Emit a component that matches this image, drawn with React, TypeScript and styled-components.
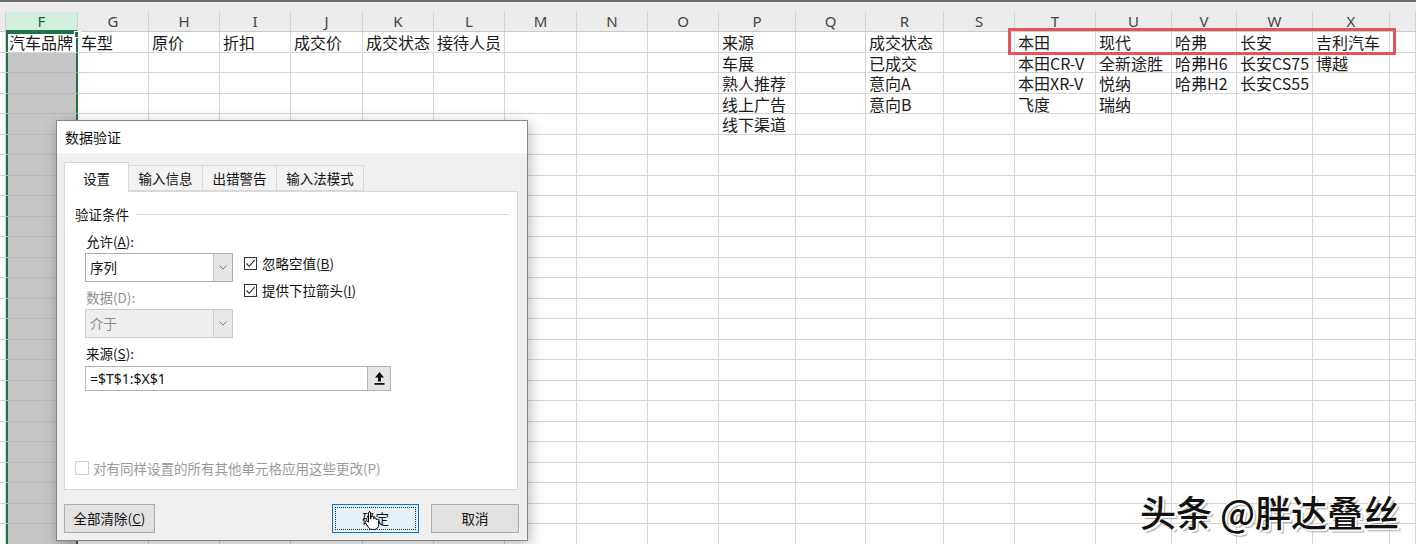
import React from "react";
import styled, { createGlobalStyle } from "styled-components";

const GlobalStyle = createGlobalStyle`
  html, body {
    margin: 0;
    padding: 0;
    background: #ffffff;
    overflow: hidden;
  }
  body {
    width: 1416px;
    height: 544px;
    font-family: "Noto Sans CJK SC", "Noto Sans", sans-serif;
  }
`;

const COLUMNS = [
  { key: "", width: 6 },
  { key: "F", width: 72 },
  { key: "G", width: 71 },
  { key: "H", width: 71 },
  { key: "I", width: 71 },
  { key: "J", width: 72 },
  { key: "K", width: 71 },
  { key: "L", width: 71 },
  { key: "M", width: 72 },
  { key: "N", width: 71 },
  { key: "O", width: 71 },
  { key: "P", width: 77 },
  { key: "Q", width: 70 },
  { key: "R", width: 78 },
  { key: "S", width: 71 },
  { key: "T", width: 81 },
  { key: "U", width: 76 },
  { key: "V", width: 65 },
  { key: "W", width: 76 },
  { key: "X", width: 77 },
  { key: "", width: 26 },
];

const CELLS: Record<string, string> = {
  F1: "汽车品牌",
  G1: "车型",
  H1: "原价",
  I1: "折扣",
  J1: "成交价",
  K1: "成交状态",
  L1: "接待人员",
  P1: "来源",
  R1: "成交状态",
  T1: "本田",
  U1: "现代",
  V1: "哈弗",
  W1: "长安",
  X1: "吉利汽车",
  P2: "车展",
  R2: "已成交",
  T2: "本田CR-V",
  U2: "全新途胜",
  V2: "哈弗H6",
  W2: "长安CS75",
  X2: "博越",
  P3: "熟人推荐",
  R3: "意向A",
  T3: "本田XR-V",
  U3: "悦纳",
  V3: "哈弗H2",
  W3: "长安CS55",
  P4: "线上广告",
  R4: "意向B",
  T4: "飞度",
  U4: "瑞纳",
  P5: "线下渠道",
};

const ROW_COUNT = 26;
const SELECTED_COL = "F";
const GREEN = "#217346";

const Screen = styled.div`
  position: relative;
  width: 1416px;
  height: 544px;
  overflow: hidden;
  background: #ffffff;
`;

const Sheet = styled.div`
  display: flex;
  flex-direction: column;
  width: 1416px;
`;

const TopStrip = styled.div`
  height: 10px;
  border-top: 2px solid #6e6e6e;
  background: #ececec;
`;

const HeaderRow = styled.div`
  display: flex;
  height: 20px;
  background: #ececec;
`;

const ColHeader = styled.div<{ $w: number; $active?: boolean }>`
  flex: none;
  box-sizing: border-box;
  width: ${(p) => p.$w}px;
  height: 20px;
  border-right: 1px solid #d2d2d2;
  border-bottom: ${(p) => (p.$active ? `2px solid ${GREEN}` : "1px solid #c9c9c9")};
  background: ${(p) => (p.$active ? "#d3efdf" : "transparent")};
  color: ${(p) => (p.$active ? "#1d5f3f" : "#454545")};
  font-family: "Noto Sans", sans-serif;
  font-size: 15px;
  line-height: 19px;
  text-align: center;
`;

const Row = styled.div`
  display: flex;
  height: 20.5px;
`;

const Cell = styled.div<{ $w: number; $sel?: boolean; $first?: boolean }>`
  position: relative;
  flex: none;
  box-sizing: border-box;
  width: ${(p) => p.$w}px;
  height: 20.5px;
  padding: 1px 0 0 3px;
  border-right: 1px solid ${(p) => (p.$sel ? GREEN : "#d6d6d6")};
  border-bottom: 1px solid ${(p) => (p.$sel && !p.$first ? "#b9b9b9" : "#d6d6d6")};
  background: ${(p) => (p.$sel && !p.$first ? "#c6c6c6" : "#ffffff")};
  box-shadow: ${(p) =>
    p.$sel
      ? p.$first
        ? `inset 2px 0 0 ${GREEN}, inset -1px 0 0 ${GREEN}, inset 0 2px 0 ${GREEN}`
        : `inset 2px 0 0 ${GREEN}, inset -1px 0 0 ${GREEN}`
      : "none"};
  color: #1b1b1b;
  font-size: 16px;
  line-height: 18.5px;
  white-space: nowrap;

  &::after {
    content: "";
    display: ${(p) => (p.$sel && p.$first ? "block" : "none")};
    position: absolute;
    top: -1px;
    right: -4px;
    width: 5px;
    height: 5px;
    background: ${GREEN};
    border: 1px solid #ffffff;
  }
`;

const Highlight = styled.div`
  position: absolute;
  left: 1008px;
  top: 28px;
  width: 388px;
  height: 27px;
  box-sizing: border-box;
  border: 3px solid #e5535e;
`;

const Dialog = styled.div`
  position: absolute;
  left: 56px;
  top: 120px;
  width: 472px;
  height: 421px;
  box-sizing: border-box;
  border: 1px solid #858585;
  background: #f0f0f0;
  box-shadow: 2px 4px 14px rgba(0, 0, 0, 0.28);
  display: flex;
  flex-direction: column;
  font-size: 13.5px;
  color: #111;
`;

const TitleBar = styled.div`
  height: 32px;
  padding-left: 8px;
  background: #ffffff;
  line-height: 32px;
  font-size: 14px;
`;

const DialogBody = styled.div`
  display: flex;
  flex-direction: column;
  padding: 9px 9px 0 7px;
`;

const TabStrip = styled.div`
  display: flex;
  align-items: flex-end;
  height: 29px;
`;

const Tab = styled.div<{ $w: number; $active?: boolean }>`
  position: relative;
  z-index: ${(p) => (p.$active ? 2 : 1)};
  box-sizing: border-box;
  width: ${(p) => p.$w}px;
  height: ${(p) => (p.$active ? 30 : 26)}px;
  margin-bottom: ${(p) => (p.$active ? -1 : 0)}px;
  margin-left: ${(p) => (p.$active ? 0 : -1)}px;
  border: 1px solid #d9d9d9;
  border-bottom: ${(p) => (p.$active ? "none" : "1px solid #d9d9d9")};
  background: ${(p) => (p.$active ? "#ffffff" : "#f3f3f3")};
  text-align: center;
  line-height: ${(p) => (p.$active ? 30 : 24)}px;
`;

const TabPanel = styled.div`
  box-sizing: border-box;
  height: 299px;
  display: flex;
  flex-direction: column;
  padding: 13px 8px 11px 10px;
  background: #ffffff;
  border: 1px solid #d9d9d9;
`;

const GroupHeader = styled.div`
  display: flex;
  align-items: center;
  height: 18px;
  gap: 8px;
`;

const GroupRule = styled.div`
  flex: 1;
  height: 1px;
  background: #dcdcdc;
`;

const Criteria = styled.div`
  display: flex;
  padding-left: 10px;
  margin-top: 8px;
`;

const FieldColumn = styled.div`
  display: flex;
  flex-direction: column;
  width: 148px;
`;

const FieldLabel = styled.div<{ $disabled?: boolean; $gap: number }>`
  height: 20px;
  margin-top: ${(p) => p.$gap}px;
  padding-left: 1px;
  line-height: 20px;
  color: ${(p) => (p.$disabled ? "#8d8d8d" : "#111")};
`;

const Select = styled.div<{ $disabled?: boolean }>`
  display: flex;
  box-sizing: border-box;
  height: 29px;
  margin-top: 2px;
  border: 1px solid ${(p) => (p.$disabled ? "#cccccc" : "#adadad")};
  background: ${(p) => (p.$disabled ? "#efefef" : "#ffffff")};
  color: ${(p) => (p.$disabled ? "#8d8d8d" : "#111")};
`;

const SelectValue = styled.div`
  flex: 1;
  padding-left: 4px;
  line-height: 27px;
`;

const SelectArrow = styled.div<{ $disabled?: boolean }>`
  display: flex;
  align-items: center;
  justify-content: center;
  width: 18px;
  border-left: 1px solid ${(p) => (p.$disabled ? "#d0d0d0" : "#c4c4c4")};
  background: ${(p) => (p.$disabled ? "#e9e9e9" : "#e6e6e6")};
`;

const OptionColumn = styled.div`
  display: flex;
  flex-direction: column;
  gap: 7px;
  margin-left: 11px;
  padding-top: 22px;
`;

const CheckRow = styled.div<{ $disabled?: boolean }>`
  display: flex;
  align-items: center;
  height: 20px;
  gap: 5px;
  color: ${(p) => (p.$disabled ? "#9a9a9a" : "#111")};
`;

const Box = styled.div<{ $disabled?: boolean }>`
  display: flex;
  align-items: center;
  justify-content: center;
  box-sizing: border-box;
  width: ${(p) => (p.$disabled ? 14 : 13)}px;
  height: ${(p) => (p.$disabled ? 14 : 13)}px;
  border: 1px solid ${(p) => (p.$disabled ? "#cfcfcf" : "#333333")};
  background: #ffffff;
`;

const SourceBlock = styled.div`
  display: flex;
  flex-direction: column;
  padding-left: 10px;
`;

const RefInput = styled.div`
  display: flex;
  box-sizing: border-box;
  width: 306px;
  height: 25px;
  margin-top: 3px;
  border: 1px solid #b4b4b4;
  background: #ffffff;
`;

const RefText = styled.div`
  flex: 1;
  padding-left: 4px;
  font-family: "Noto Sans", sans-serif;
  font-size: 14px;
  line-height: 23px;
`;

const RefButton = styled.div`
  display: flex;
  align-items: center;
  justify-content: center;
  width: 22px;
  border-left: 1px solid #b4b4b4;
  background: #e4e4e4;
`;

const ApplyRow = styled(CheckRow)`
  margin-top: auto;
  gap: 4px;
`;

const ButtonBar = styled.div`
  display: flex;
  justify-content: space-between;
  margin-top: 14px;
`;

const ButtonGroup = styled.div`
  display: flex;
  gap: 12px;
  margin-right: -1px;
`;

const DialogButton = styled.div<{ $w: number; $primary?: boolean }>`
  position: relative;
  box-sizing: border-box;
  width: ${(p) => p.$w}px;
  height: 29px;
  border: 1px solid ${(p) => (p.$primary ? "#0078d7" : "#adadad")};
  background: ${(p) => (p.$primary ? "#e5f1fb" : "#e1e1e1")};
  text-align: center;
  line-height: 27px;

  &::after {
    content: "";
    display: ${(p) => (p.$primary ? "block" : "none")};
    position: absolute;
    inset: 2px;
    border: 1px dotted #222;
  }
`;

const Pointer = styled.div`
  position: absolute;
  left: 364px;
  top: 510px;
  width: 17px;
  height: 21px;
`;

const Watermark = styled.div`
  position: absolute;
  right: 17px;
  top: 491px;
  font-size: 36px;
  font-weight: 500;
  line-height: 40px;
  color: #111111;
  text-shadow: 2px 2px 0 #ffffff, 3px 3px 1px rgba(0, 0, 0, 0.35), -1px -1px 0 #ffffff;
  white-space: nowrap;
`;

const Chevron = () => (
  <svg width="8" height="5" viewBox="0 0 8 5">
    <path d="M0.5 0.5 L4 4 L7.5 0.5" fill="none" stroke="#7a7a7a" strokeWidth="1" />
  </svg>
);

const Check = () => (
  <svg width="11" height="11" viewBox="0 0 11 11">
    <path d="M1.5 5.5 L4.2 8.3 L9.6 2.2" fill="none" stroke="#222" strokeWidth="1.1" />
  </svg>
);

const CollapseIcon = () => (
  <svg width="11" height="15" viewBox="0 0 11 15">
    <path d="M5.5 1 L10 6.5 L7 6.5 L7 10.5 L4 10.5 L4 6.5 L1 6.5 Z" fill="#111" />
    <rect x="0.5" y="12" width="10" height="1.8" fill="#111" />
  </svg>
);

const HandCursor = () => (
  <svg width="17" height="21" viewBox="0 0 17 21">
    <path
      d="M5 1.5c.8 0 1.5.6 1.5 1.4v6l.5-.1V7.5c0-.8.7-1.3 1.4-1.3s1.3.5 1.3 1.3v1.2c.2-.6.7-.9 1.3-.9.7 0 1.3.5 1.3 1.3v.9c.2-.4.7-.7 1.2-.7.7 0 1.2.6 1.2 1.3v4.2c0 2.6-2 4.7-4.6 4.7H8.4c-1.5 0-2.9-.7-3.8-1.9L1.4 12.9c-.4-.6-.3-1.4.3-1.8.6-.4 1.4-.3 1.9.2l.9 1V2.9c0-.8.7-1.4 1.5-1.4z"
      fill="#ffffff"
      stroke="#000000"
      strokeWidth="1"
    />
  </svg>
);

const rows = Array.from({ length: ROW_COUNT }, (_, i) => i + 1);

const DataValidationDialog = () => (
  <Dialog>
    <TitleBar>数据验证</TitleBar>
    <DialogBody>
      <TabStrip>
        <Tab $w={65} $active>设置</Tab>
        <Tab $w={75}>输入信息</Tab>
        <Tab $w={75}>出错警告</Tab>
        <Tab $w={88}>输入法模式</Tab>
      </TabStrip>
      <TabPanel>
        <GroupHeader>
          <span>验证条件</span>
          <GroupRule />
        </GroupHeader>
        <Criteria>
          <FieldColumn>
            <FieldLabel $gap={0}>允许(<u>A</u>):</FieldLabel>
            <Select>
              <SelectValue>序列</SelectValue>
              <SelectArrow>
                <Chevron />
              </SelectArrow>
            </Select>
            <FieldLabel $gap={5} $disabled>数据(D):</FieldLabel>
            <Select $disabled>
              <SelectValue>介于</SelectValue>
              <SelectArrow $disabled>
                <Chevron />
              </SelectArrow>
            </Select>
          </FieldColumn>
          <OptionColumn>
            <CheckRow>
              <Box>
                <Check />
              </Box>
              <span>忽略空值(<u>B</u>)</span>
            </CheckRow>
            <CheckRow>
              <Box>
                <Check />
              </Box>
              <span>提供下拉箭头(<u>I</u>)</span>
            </CheckRow>
          </OptionColumn>
        </Criteria>
        <SourceBlock>
          <FieldLabel $gap={5}>来源(<u>S</u>):</FieldLabel>
          <RefInput>
            <RefText>=$T$1:$X$1</RefText>
            <RefButton>
              <CollapseIcon />
            </RefButton>
          </RefInput>
        </SourceBlock>
        <ApplyRow $disabled>
          <Box $disabled />
          <span>对有同样设置的所有其他单元格应用这些更改(P)</span>
        </ApplyRow>
      </TabPanel>
      <ButtonBar>
        <DialogButton $w={91}>全部清除(<u>C</u>)</DialogButton>
        <ButtonGroup>
          <DialogButton $w={87} $primary>确定</DialogButton>
          <DialogButton $w={88}>取消</DialogButton>
        </ButtonGroup>
      </ButtonBar>
    </DialogBody>
  </Dialog>
);

export default function App() {
  return (
    <>
      <GlobalStyle />
      <Screen>
        <Sheet>
          <TopStrip />
          <HeaderRow>
            {COLUMNS.map((c, i) => (
              <ColHeader key={i} $w={c.width} $active={c.key === SELECTED_COL}>
                {c.key}
              </ColHeader>
            ))}
          </HeaderRow>
          {rows.map((r) => (
            <Row key={r}>
              {COLUMNS.map((c, i) => (
                <Cell
                  key={i}
                  $w={c.width}
                  $sel={c.key === SELECTED_COL}
                  $first={r === 1}
                >
                  {c.key ? CELLS[`${c.key}${r}`] ?? "" : ""}
                </Cell>
              ))}
            </Row>
          ))}
        </Sheet>
        <Highlight />
        <DataValidationDialog />
        <Pointer>
          <HandCursor />
        </Pointer>
        <Watermark>头条 @胖达叠丝</Watermark>
      </Screen>
    </>
  );
}
